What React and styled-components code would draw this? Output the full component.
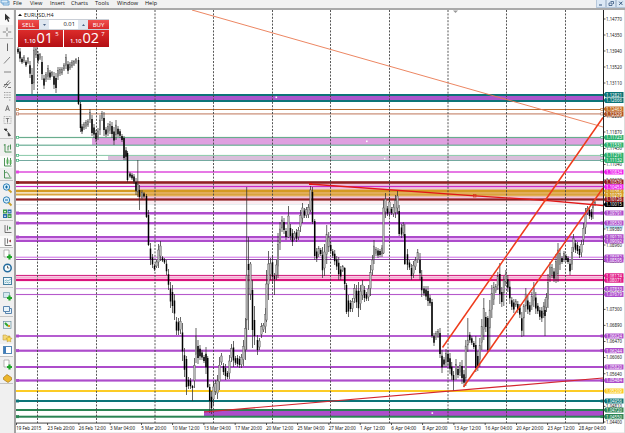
import styled, { createGlobalStyle } from "styled-components";

const menus = [
  ["File", 17],
  ["View", 20],
  ["Insert", 21],
  ["Charts", 24],
  ["Tools", 22],
  ["Window", 28],
  ["Help", 20],
];

// [icon, slot height, active, divider below]
const tools = [
  ["cursor", 15, true],
  ["cross", 14, false, true],
  ["vline", 15],
  ["tline", 12],
  ["hline", 12],
  ["channel", 12],
  ["fibo", 12],
  ["textA", 12],
  ["label", 12],
  ["arrows", 13, false, true],
  ["bars", 17],
  ["candles", 12, true],
  ["line", 13, false, true],
  ["zoomIn", 13],
  ["zoomOut", 13],
  ["tiles", 14, false, true],
  ["scroll", 15],
  ["shift", 12, true, true],
  ["addDoc", 14],
  ["clock", 12],
  ["template", 14, false, true],
  ["addGreen", 15],
  ["windows", 14, false, true],
  ["market", 15],
  ["star", 12],
  ["panel", 13, true, true],
  ["newOrder", 16],
  ["gold", 11, false, true],
];

const PURPLE = "#ad4ccb";
const LILAC = "#dda0ec";
const TEAL = "#0c7477";
const GREEN = "#2b8454";
const MINT = "#2fb270";
const DARKRED = "#921f22";
const GOLD = "#d49a22";

// [y, thickness, color]
const levels = [
  [95, 2, TEAL],
  [98, 4, "#ab56cc"],
  [101, 2, TEAL],
  [109.5, 1, "#bd7031"],
  [113.9, 1.2, "#c98c74"],
  [137.5, 1.2, "#69ad8e"],
  [145.2, 1.2, "#69ad94"],
  [155.4, 1, "#88c8a8"],
  [160.5, 1, "#74aaa0"],
  [172, 2, "#e678e5"],
  [182.5, 2.6, DARKRED],
  [186.5, 1.2, "#cb2bc6"],
  [191, 2.6, GOLD],
  [194.5, 2, "#d9a43c"],
  [199.5, 2.2, DARKRED],
  [204.5, 1, "#e6eef0"],
  [213, 2, PURPLE],
  [214.5, 1, LILAC],
  [223, 2, PURPLE],
  [224.5, 0.8, LILAC],
  [237, 2, PURPLE],
  [239, 2, "#e9b3f5"],
  [241, 2, PURPLE],
  [257.3, 1.4, "#dc94ec"],
  [259.5, 1, "#8c3ba2"],
  [275.5, 1.2, "#d32a85"],
  [277.5, 2, "#f6a9d1"],
  [280, 2.2, "#db137d"],
  [288.7, 1.1, "#d18fe0"],
  [294.5, 1.1, "#b659cb"],
  [336, 1.8, PURPLE],
  [350.7, 2.2, PURPLE],
  [367, 2, PURPLE],
  [380.5, 2.2, PURPLE],
  [391, 2, "#fccb25"],
  [401, 2, TEAL],
  [410, 2, GREEN],
  [416.7, 2, GREEN],
];

// [x, y, width, height, color]
const zones = [
  [92, 138, 511, 7, "#dfa0e0"],
  [108, 156, 495, 4.5, "#d9bedb"],
  [138, 184, 465, 15, "#efc4df"],
  [138, 189.5, 465, 7, "#e8b675"],
  [138, 200, 465, 4, "#faecf1"],
  [204, 411, 399, 5, PURPLE],
];

const separators = [37.5, 96.5, 155, 213.5, 272.5, 330.5, 389.5, 448, 506.5, 565.5];

const ticks = [
  ["1.14770", 19], ["1.14350", 35], ["1.13940", 51], ["1.13520", 67],
  ["1.13110", 83], ["1.12280", 116.5], ["1.11870", 132], ["1.11450", 148.5],
  ["1.11040", 164.5], ["1.10620", 180], ["1.09380", 229], ["1.08960", 245],
  ["1.08550", 261.5], ["1.07720", 292], ["1.07300", 309.3], ["1.06890", 325.3],
  ["1.06470", 341.5], ["1.06060", 357.5], ["1.05640", 373.8], ["1.04810", 406.3],
  ["1.04400", 422],
];

const tags = [
  ["1.12821", 94.6, TEAL], ["1.12666", 100.4, TEAL],
  ["1.12463", 109, "#c56b20"], ["1.12329", 114, "#ad5020"],
  ["1.11723", 137.5, MINT], ["1.11531", 145, MINT],
  ["1.11271", 155.3, MINT], ["1.11132", 160.5, MINT],
  ["1.10834", 172, "#ee20ed"], ["1.10576", 182, DARKRED],
  ["1.10382", 191, GOLD], ["1.10453", 186.8, "#ee20ed"],
  ["1.10279", 194.8, GOLD], ["1.10126", 199.5, DARKRED],
  ["1.10015", 204.5, "#000"], ["1.09791", 213, PURPLE],
  ["1.09530", 223, PURPLE], ["1.09170", 236.8, PURPLE],
  ["1.09092", 240.8, PURPLE], ["1.08652", 257, PURPLE],
  ["1.08595", 259.8, PURPLE], ["1.08174", 275.8, "#e11a86"],
  ["1.08071", 280.2, "#e11a86"], ["1.07833", 288.7, PURPLE],
  ["1.07679", 294.5, PURPLE], ["1.06624", 336, PURPLE],
  ["1.06244", 350.7, PURPLE], ["1.05820", 367, PURPLE],
  ["1.05484", 380.5, PURPLE], ["1.05209", 391, "#fccb25"],
  ["1.04956", 401, TEAL], ["1.04720", 410, GREEN],
  ["1.04550", 416.6, GREEN],
];

const dates = [
  "19 Feb 2015", "23 Feb 20:00", "26 Feb 12:00", "3 Mar 04:00", "5 Mar 20:00",
  "10 Mar 12:00", "13 Mar 04:00", "17 Mar 20:00", "20 Mar 12:00", "25 Mar 04:00",
  "27 Mar 20:00", "1 Apr 12:00", "6 Apr 04:00", "8 Apr 20:00", "13 Apr 12:00",
  "16 Apr 04:00", "20 Apr 20:00", "23 Apr 12:00", "28 Apr 04:00",
];

// [y, color, hollow]
const handles = [
  [109.5, "#bd7031", true], [113.9, "#b66b50", true], [137.5, MINT, true],
  [145.2, MINT, true], [155.4, MINT, true], [160.5, MINT, true],
  [172, "#e640e5"], [182.5, DARKRED], [213, PURPLE], [223, PURPLE],
  [237, PURPLE], [336, PURPLE], [350.7, PURPLE], [380.5, PURPLE],
  [401, TEAL], [416.7, GREEN],
];

// x, high, low and optionally body top, body bottom
const candles = [
  [18, 47, 54], [20, 48, 62], [22, 57, 64], [24, 55, 63], [26, 60, 67],
  [28, 57, 64], [30, 61, 78], [32, 68, 94, 75, 84], [34, 47, 90, 50, 83],
  [36, 46, 58], [38, 51, 64], [40, 53, 60], [42, 56, 80], [44, 75, 89],
  [46, 72, 82], [48, 65, 80], [50, 70, 80], [52, 71, 77], [54, 72, 89],
  [56, 73, 93], [58, 67, 80], [60, 67, 76], [62, 67, 75], [64, 63, 71],
  [66, 54, 69], [68, 61, 74], [70, 62, 70], [72, 60, 68], [74, 60, 66],
  [76, 58, 64], [78.5, 57, 105, 60, 104], [80.5, 102, 132, 104, 128],
  [82, 124, 134], [84, 122, 130], [86, 120, 129], [88, 119, 127],
  [90, 109, 123], [92, 115, 136, 119, 133], [94, 124, 138], [96, 130, 142],
  [98, 128, 140], [100, 115, 135], [102, 111, 121], [104, 112, 136],
  [106, 127, 137], [108, 123, 136], [110, 121, 134], [112, 122, 138],
  [114, 127, 145], [116, 120, 140], [118, 126, 137], [120, 129, 138],
  [122, 134, 142], [124, 136, 160, 138, 158], [126, 147, 160],
  [127.5, 151, 182, 153, 180], [130, 172, 178], [132, 173, 180],
  [134, 174, 184], [136, 178, 195], [137.8, 160, 197, 184, 192],
  [139.5, 185, 210, 190, 197], [142, 190, 200], [144, 192, 198],
  [146.5, 194, 218, 196, 217], [148.5, 210, 246, 215, 245],
  [150.5, 243, 265], [152.5, 254, 268], [154.5, 264, 271], [156.5, 260, 268],
  [158.5, 244, 268], [160.5, 241, 261], [162.5, 256, 262], [164.5, 258, 264],
  [166.5, 260, 275], [168.5, 269, 290], [170.5, 282, 308], [172.5, 285, 313],
  [174.5, 294, 320], [176.5, 317, 335], [178.5, 318, 335], [180.5, 317, 334],
  [182.5, 323, 361], [184.5, 348, 377], [186.5, 356, 395, 359, 387],
  [188.5, 377, 389], [190.5, 378, 389], [192.5, 385, 401, 386, 388],
  [194.5, 358, 388], [196, 328, 363], [198, 340, 364], [200, 345, 360],
  [202, 350, 360], [204, 355, 363], [206, 347, 374], [207.7, 356, 388, 358, 387],
  [209.7, 384, 413, 387, 401], [211.5, 391, 414], [213.5, 381, 405],
  [215.5, 380, 395], [217.5, 375, 399], [219.5, 357, 390], [221.5, 353, 365],
  [223.5, 363, 375], [225.5, 364, 380], [227.5, 371, 379], [229.5, 355, 379],
  [231.5, 344, 362], [233.5, 341, 367], [235.5, 356, 365], [237.5, 355, 367],
  [239.5, 356, 368], [241.5, 354, 368], [243.5, 340, 366], [245.5, 318, 360],
  [246.7, 187, 350, 275, 320], [248.5, 237, 330, 264, 270],
  [250.5, 262, 300, 264, 294], [252.5, 280, 348, 290, 330],
  [254.5, 306, 345, 320, 336], [257.5, 335, 355], [259.5, 338, 350],
  [261.5, 323, 338], [263.5, 323, 332], [265.5, 308, 333],
  [266.5, 270, 322, 284, 320], [268.5, 251, 300, 264, 284], [270.5, 258, 280],
  [272.5, 255, 284], [274.5, 273, 295, 276, 279], [276.5, 260, 280],
  [278, 233, 278], [280, 222, 250], [282, 216, 232], [284, 218, 234],
  [286, 228, 240], [288.5, 206, 238, 216, 237], [290.5, 224, 240],
  [292.5, 229, 246], [294.5, 231, 240], [296.5, 229, 242], [298.5, 227, 240],
  [300.5, 210, 232], [302.5, 203, 223], [304.5, 208, 218], [306.5, 207, 218],
  [308.5, 204, 218], [310.5, 186, 212, 190, 210], [312.5, 187, 224, 192, 222],
  [314.7, 219, 260, 221, 256], [316.7, 248, 262], [318.7, 246, 257],
  [320.7, 248, 256], [322.5, 247, 278], [324.5, 244, 276], [326.7, 225, 264],
  [328.7, 232, 252], [330.7, 242, 254], [332.7, 249, 258], [334.7, 250, 265],
  [336.7, 256, 270], [338.7, 257, 280], [340.7, 266, 280], [342.7, 265, 272],
  [344.7, 267, 290, 268, 284], [346.5, 283, 314, 285, 312], [348.5, 295, 317],
  [350.5, 300, 312], [352.5, 298, 312], [354.5, 284, 303], [356.5, 285, 308],
  [358.5, 282, 317], [360.5, 285, 310], [362.5, 280, 300], [364.5, 286, 302],
  [366.5, 292, 301], [368.5, 285, 301], [370.5, 265, 296], [372.5, 255, 275],
  [374, 240, 264], [376, 247, 256], [378, 248, 258], [380, 249, 257],
  [382, 245, 257], [383.5, 200, 254, 208, 253], [385.5, 193, 218],
  [387.5, 206, 216], [389.5, 197, 217], [391.5, 207, 215], [393.5, 204, 217],
  [395.5, 195, 218], [397.5, 190, 214], [399.2, 205, 236, 211, 234],
  [401.5, 224, 238], [403.3, 222, 236], [404.8, 224, 265, 234, 264],
  [407.5, 249, 270], [409.5, 260, 270], [411.5, 264, 280], [413.5, 261, 278],
  [415.5, 257, 270], [417.7, 249, 263], [420, 253, 280], [421.7, 270, 297],
  [424, 286, 296], [426, 286, 300], [428, 286, 306], [430, 295, 306],
  [432, 299, 338, 302, 336], [434, 333, 346], [436, 331, 340], [438, 329, 338],
  [440, 328, 358, 333, 354], [442, 350, 373], [444, 357, 367], [446, 349, 367],
  [448, 350, 366], [450, 353, 374], [451.7, 362, 380], [453.5, 371, 391, 375, 380],
  [456, 359, 380], [458, 366, 378], [460, 362, 376], [462, 360, 384],
  [464, 370, 387], [465.8, 340, 386, 346, 378], [467.8, 318, 352, 340, 345],
  [469.8, 332, 343], [471.8, 336, 345], [473.8, 341, 349],
  [475.8, 336, 372, 345, 368], [477.8, 351, 371], [479.8, 338, 367],
  [481.8, 319, 350], [483.8, 298, 340], [485.8, 312, 332], [487.8, 316, 352, 318, 350],
  [489.8, 300, 350, 310, 328], [491.8, 285, 318], [493.8, 282, 305],
  [495.8, 284, 293], [497.8, 272, 290], [499.8, 263, 304, 274, 294],
  [501.8, 287, 307], [503.8, 276, 306, 280, 293], [505.8, 270, 286],
  [507.8, 275, 292], [509.8, 281, 304], [511.8, 297, 310], [513.8, 299, 313],
  [515.8, 299, 307], [517.8, 301, 313], [519.8, 304, 318], [521.8, 312, 337],
  [523.8, 304, 336, 306, 318], [525.8, 288, 312], [527.8, 296, 314],
  [529.8, 302, 315], [531.8, 292, 310], [533.8, 282, 307], [535.8, 292, 314],
  [537.8, 303, 314], [539.8, 307, 320], [541.8, 307, 322], [543.8, 302, 318],
  [545, 299, 336, 310, 316], [546.5, 293, 312], [548, 274, 308],
  [550, 262, 282], [552, 264, 278], [554, 268, 282], [556, 254, 283],
  [558, 243, 282, 250, 274], [560, 248, 270], [562, 256, 264], [564, 251, 262],
  [566, 254, 262], [568, 256, 264], [570, 260, 275], [572, 247, 270],
  [573.5, 234, 252], [575.5, 240, 253], [577.5, 242, 254], [579.5, 246, 258],
  [581.5, 240, 257], [583.5, 223, 245], [585.5, 208, 234], [587.5, 206, 215],
  [589.5, 207, 219], [591.5, 209, 220], [593, 200, 219, 204, 208],
  [595, 201, 206],
];

const Candle = ({ data, prev }) => {
  const [x, high, low, top, bottom] = data;
  const inset = (low - high) * 0.25;
  const y1 = top ?? high + inset;
  const y2 = bottom ?? low - inset;
  const rising = prev ? high + low < prev[1] + prev[2] : false;
  return (
    <g>
      <line x1={x} x2={x} y1={high} y2={low} stroke="#333" strokeWidth="0.75" />
      <rect
        x={x - 0.75}
        y={y1}
        width="1.5"
        height={Math.max(1, y2 - y1)}
        fill={rising ? "#b5b5b5" : "#000"}
        stroke={rising ? "#555" : "none"}
        strokeWidth="0.4"
      />
    </g>
  );
};

const Chart = () => (
  <ChartSvg viewBox="16 10 609 423">
    <rect x="16" y="10" width="609" height="423" fill="#fff" />
    {zones.map(([x, y, w, h, color]) => (
      <rect key={y} x={x} y={y} width={w} height={h} fill={color} />
    ))}
    {levels.map(([y, size, color]) => (
      <rect key={y} x="16" y={y - size / 2} width="587" height={size} fill={color} />
    ))}
    {separators.map((x) => (
      <line
        key={x}
        x1={x}
        x2={x}
        y1="10"
        y2="423"
        stroke="#444"
        strokeWidth="0.9"
        strokeDasharray="2 1.4"
      />
    ))}
    {candles.map((candle, i) => (
      <Candle key={candle[0]} data={candle} prev={candles[i - 1]} />
    ))}
    {handles.map(([y, color, hollow]) => (
      <g key={y} fill={hollow ? "#fff" : color} stroke={color} strokeWidth="0.6">
        <rect x="16.5" y={y - 1.1} width="2.2" height="2.2" />
        <rect x="600.8" y={y - 1.1} width="2.2" height="2.2" />
      </g>
    ))}
    <g fill="#fff">
      <rect x="275.5" y="96.5" width="1.6" height="1.6" />
      <rect x="366" y="140.5" width="1.6" height="1.6" />
      <rect x="384" y="157.8" width="1.4" height="1.4" />
      <rect x="431.5" y="412.3" width="1.6" height="1.6" />
    </g>
    <g fill="none">
      <path d="M192 10 L603 127" stroke="#ea7850" strokeWidth="0.9" />
      <path d="M442.5 347.5 L603 117.5" stroke="#ee3b1b" strokeWidth="1.5" />
      <path d="M463.5 387 L603 188" stroke="#ee3b1b" strokeWidth="1.5" />
      <path d="M309 184 L475 195.8 L545 200.3 L603 205.5" stroke="#e01818" strokeWidth="1.3" />
      <path d="M204 412 L603 378" stroke="#d4252f" strokeWidth="1.2" />
      <rect x="473.5" y="194.5" width="2.5" height="2.5" stroke="#d43b18" strokeWidth="0.7" />
    </g>
    <rect x="309" y="183" width="3" height="2" fill="#e01818" />
    <rect x="543.5" y="198.8" width="3" height="2.5" fill="#ee3b1b" />
    <path d="M453 10.5 h5 l-2.5 2.5z" fill="#999" />
    <rect x="603" y="10" width="1" height="413" fill="#222" />
    <rect x="16" y="422.6" width="588" height="0.9" fill="#333" />
    <rect x="604" y="224.5" width="19" height="4" fill="#b9e4f4" />
    {ticks.map(([text, y]) => (
      <g key={text}>
        <rect x="604" y={y - 0.4} width="1.5" height="0.8" fill="#333" />
        <Price x="606" y={y + 1.9} textLength="16" lengthAdjust="spacingAndGlyphs">
          {text}
        </Price>
      </g>
    ))}
    {tags.map(([text, y, color]) => (
      <g key={text}>
        <path d={`M603.5 ${y} l2 -2.6 h18 v5.2 h-18z`} fill={color} />
        <Price $light x="606" y={y + 1.9} textLength="16" lengthAdjust="spacingAndGlyphs">
          {text}
        </Price>
      </g>
    ))}
    {dates.map((text, i) => {
      const x = 16 + i * 31.25;
      return (
        <g key={text}>
          <rect x={x} y="423" width="0.8" height="2" fill="#333" />
          <Price
            x={x + 0.3}
            y="430.3"
            textLength={text.length > 11 ? 27 : 25}
            lengthAdjust="spacingAndGlyphs"
          >
            {text}
          </Price>
        </g>
      );
    })}
    <rect x="16" y="432" width="609" height="1" fill="#eee" />
    <rect x="624" y="10" width="1" height="423" fill="#ddd" />
  </ChartSvg>
);

const plus = <path d="M6 8h5M8.5 5.5v5" stroke="#20a52b" strokeWidth="2.2" />;

const icons = {
  cursor: <path d="M4 1.5v7l1.8-1.6 1.3 3 1.2-.6-1.3-2.8h2.3z" fill="#333" />,
  cross: <path d="M6 1.5v3.5M6 7v3.5M1.8 6h3.2M7 6h3.2" stroke="#666" strokeWidth=".8" />,
  vline: <path d="M6.5 2.5v7.5" stroke="#666" />,
  tline: <path d="M3 9.5L9 3" stroke="#666" strokeWidth="0.8" />,
  hline: <path d="M3 6h7" stroke="#777" strokeWidth=".9" />,
  channel: <path d="M2.5 9L8 2.5M4 10l5.5-6M3 6.5h4M7 9.5h3" stroke="#555" strokeWidth=".8" />,
  fibo: <path d="M3 2.5h7M3 5h7M3 7.5h7M8 10h2" stroke="#888" strokeWidth=".8" strokeDasharray="1 .6" />,
  textA: <path d="M4.6 9L6.5 3.5 8.4 9M5.3 7.2h2.4" stroke="#555" strokeWidth=".8" />,
  label: (
    <>
      <rect x="3" y="2.5" width="7" height="7" stroke="#999" strokeWidth=".7" strokeDasharray="1 .7" />
      <path d="M4.8 4.5h3.4M6.5 4.5V8.5" stroke="#666" strokeWidth=".8" />
    </>
  ),
  arrows: <path d="M3 3l3 0-1 2zM7 7l2.5 2.5L7.5 10zM5 4l4 4.5" fill="#333" stroke="#333" strokeWidth=".7" />,
  bars: <path d="M4 2v8h6.5M4 3H2.8M7 4v4.5M7 4h1.5M9.5 2.5v5" stroke="#267b32" strokeWidth=".8" />,
  candles: (
    <>
      <path d="M3.5 2v8h7M6.5 1.5v7M9.5 2v7" stroke="#267b32" strokeWidth=".8" />
      <path d="M5.5 3.5h2v4h-2zM8.7 4h1.8v4H8.7z" fill="#56ad59" />
    </>
  ),
  line: <path d="M3.5 2v8H10.5M4 5c2-2 3 0 5 4" stroke="#267b32" strokeWidth=".8" />,
  zoomIn: (
    <>
      <path d="M7.5 7.5l3 3" stroke="#caa12b" strokeWidth="1.8" />
      <circle cx="5.5" cy="5" r="3.2" fill="#d7f0fc" stroke="#3180b5" />
      <path d="M4 5h3M5.5 3.5v3" stroke="#1568a4" />
    </>
  ),
  zoomOut: (
    <>
      <path d="M7.5 7.5l3 3" stroke="#caa12b" strokeWidth="1.8" />
      <circle cx="5.5" cy="5" r="3.2" fill="#d7f0fc" stroke="#3180b5" />
      <path d="M4 5h3" stroke="#1568a4" />
    </>
  ),
  tiles: (
    <>
      <path d="M2 1.5h4v4H2zM6.5 6h4v4h-4z" fill="#3b9a48" />
      <path d="M6.5 1.5h4v4h-4zM2 6h4v4H2z" fill="#286dac" />
      <path d="M3 3.7h2M7.5 3.7h2M3 8.2h2M7.5 8.2h2" stroke="#fff" />
    </>
  ),
  scroll: (
    <>
      <path d="M4 2v7.5h6.5M6.5 2.5v5" stroke="#555" strokeWidth=".8" />
      <path d="M8 3.5l2.5 1.5L8 6.5z" fill="#36a04a" />
    </>
  ),
  shift: (
    <>
      <path d="M4 2v7.5h6.5M6.5 2.5v5" stroke="#555" strokeWidth=".8" />
      <path d="M10 3.5L7.5 5 10 6.5z" fill="#9b4848" />
    </>
  ),
  addDoc: (
    <>
      <path d="M3 1h5v7H3z" fill="#fff" stroke="#999" strokeWidth=".7" />
      {plus}
    </>
  ),
  clock: (
    <>
      <circle cx="6.5" cy="6" r="3.7" fill="#f7fcff" stroke="#246b9e" strokeWidth="1.5" />
      <path d="M6.5 3.8V6h1.7" stroke="#333" strokeWidth=".7" />
    </>
  ),
  template: (
    <>
      <rect x="2.5" y="2.5" width="8" height="7" fill="#eef8fd" stroke="#447fa0" />
      <path d="M3.5 6l2-1 1.5 1 3-2M3.5 8l2-1 2 1 2-1" stroke="#579cae" strokeWidth=".7" />
    </>
  ),
  addGreen: (
    <>
      <path d="M2.5 2.5h6v5h-6z" fill="#d6e9f0" stroke="#6b98a6" strokeWidth=".7" />
      {plus}
    </>
  ),
  windows: <path d="M2.5 2.5h6v5h-6zM4.5 8v1.5h6V4.5H9" fill="#e7f4fb" stroke="#5984ae" />,
  market: (
    <>
      <rect x="2.5" y="2.5" width="7.5" height="7" fill="#e7f2f0" stroke="#6b91a1" strokeWidth=".7" />
      <path d="M4 4l3 3" stroke="#2ca42b" strokeWidth="2" />
      <path d="M7 7h2" stroke="#d9981f" strokeWidth="2" />
    </>
  ),
  star: (
    <>
      <path d="M2 3h3l1 1h3v4H2z" fill="#f5d777" stroke="#bb9332" strokeWidth=".5" />
      <path d="M8 4l1 2 2 .3-1.5 1.5.3 2L8 9l-1.9.8.3-2L5 6.3 7 6z" fill="#ffe050" stroke="#b08a23" strokeWidth=".5" />
    </>
  ),
  panel: (
    <>
      <rect x="2.5" y="2.5" width="8" height="7" fill="#fff" stroke="#5487b6" />
      <path d="M3 3h2v6H3z" fill="#3e7dbc" />
    </>
  ),
  newOrder: (
    <>
      <path d="M3 1h5v7H3z" fill="#fff" stroke="#999" strokeWidth=".7" />
      {plus}
    </>
  ),
  gold: <path d="M2.5 5.5L6 2.5l4.5 3V8L7 10.5l-4.5-3z" fill="#ecb62c" stroke="#9a6b12" strokeWidth=".6" />,
};

function App() {
  return (
    <>
      <GlobalStyle />
      <Terminal>
        <MenuBar>
          <Logo viewBox="0 0 10 6">
            <path d="M1 0h7v3H1zM3 3v2h6V1" fill="#d9ecfa" stroke="#5697cd" strokeWidth=".8" />
          </Logo>
          {menus.map(([name, width]) => (
            <MenuItem key={name} $width={width}>
              {name}
            </MenuItem>
          ))}
          <WindowButtons>
            <svg width="8" height="7"><path d="M2 5h3" stroke="#37577e" /></svg>
            <svg width="8" height="7">
              <path d="M3.5 1.5h3v2.5M2 3h3v2.5H2z" fill="none" stroke="#37577e" strokeWidth=".8" />
            </svg>
            <svg width="8" height="7"><path d="M2.2 1.7l3.2 3.2M5.4 1.7L2.2 4.9" stroke="#37577e" /></svg>
          </WindowButtons>
        </MenuBar>
        <Body>
          <ToolBar>
            {tools.map(([name, height, active, divider]) => (
              <Tool key={name} $height={height} $active={active} $divider={divider}>
                <svg width="12" height="12" viewBox="0 0 12 12" fill="none">
                  {icons[name]}
                </svg>
              </Tool>
            ))}
          </ToolBar>
          <ChartArea>
            <Chart />
            <TradePanel>
              <Symbol>
                <svg width="4" height="3"><path d="M0 3l2-2.2L4 3z" fill="#111" /></svg>
                EURUSD,H4
              </Symbol>
              <VolumeRow>
                <SideButton>SELL</SideButton>
                <Stepper>
                  <svg width="3" height="2"><path d="M0 0h3L1.5 2z" fill="#4a6386" /></svg>
                </Stepper>
                <Volume>0.01</Volume>
                <Stepper>
                  <svg width="3" height="2"><path d="M0 2h3L1.5 0z" fill="#4a6386" /></svg>
                </Stepper>
                <SideButton>BUY</SideButton>
              </VolumeRow>
              <QuoteRow>
                <Quote>
                  <Small>1.10</Small>
                  <Big>01</Big>
                  <Sup>5</Sup>
                </Quote>
                <Quote>
                  <Small>1.10</Small>
                  <Big>02</Big>
                  <Sup>7</Sup>
                </Quote>
              </QuoteRow>
            </TradePanel>
          </ChartArea>
        </Body>
      </Terminal>
    </>
  );
}

export default App;

const GlobalStyle = createGlobalStyle`
  body {
    margin: 0;
    overflow: hidden;
    font-family: "Open Sans", "Noto Sans", sans-serif;
  }

  svg {
    display: block;
  }
`;

const Terminal = styled.div`
  display: flex;
  flex-direction: column;
  width: 625px;
  height: 433px;
  overflow: hidden;
  background-color: #f0f0f0;
`;

const MenuBar = styled.header`
  display: flex;
  height: 8px;
  box-sizing: border-box;
  background-color: #f1f1f1;
`;

const Logo = styled.svg`
  width: 10px;
  height: 6px;
  margin-right: 3px;
`;

const MenuItem = styled.span`
  width: ${({ $width }) => $width}px;
  height: 7px;
  font-size: 5.6px;
  line-height: 6px;
  color: #111;
  white-space: nowrap;
`;

const WindowButtons = styled.div`
  display: flex;
  gap: 2px;
  margin-left: auto;

  svg {
    background-color: #dce8f5;
    outline: 0.5px solid #b6c7da;
  }
`;

const Body = styled.div`
  display: flex;
  flex: 1;
  min-height: 0;
  border-top: 2px solid #a9a9a9;
  box-sizing: border-box;
`;

const ToolBar = styled.nav`
  width: 16px;
  box-sizing: border-box;
  border-right: 2px solid #a2a2a2;
  background-color: #f0f0f0;
`;

const Tool = styled.div`
  display: flex;
  align-items: center;
  justify-content: center;
  width: 13px;
  height: ${({ $height }) => $height}px;
  box-sizing: border-box;
  background-color: ${({ $active }) => ($active ? "#fafafa" : "transparent")};
  border-bottom: ${({ $divider }) => ($divider ? "1px solid #c4c4c4" : "none")};

  svg {
    flex-shrink: 0;
  }
`;

const ChartArea = styled.main`
  position: relative;
  width: 609px;
  height: 423px;
`;

const ChartSvg = styled.svg`
  width: 609px;
  height: 423px;
`;

const Price = styled.text`
  font-family: "Noto Sans", sans-serif;
  font-size: 5.4px;
  fill: ${({ $light }) => ($light ? "#fff" : "#111")};
`;

const TradePanel = styled.section`
  position: absolute;
  top: 0;
  left: 2px;
  width: 91px;
`;

const Symbol = styled.div`
  display: flex;
  align-items: center;
  gap: 2px;
  height: 9px;
  font-size: 5.4px;
  line-height: 8px;
  color: #111;
`;

const VolumeRow = styled.div`
  display: flex;
  height: 9px;
  border: solid #c9ced6;
  border-width: 0.5px 0;
  background-color: #fff;
`;

const SideButton = styled.div`
  width: 21px;
  font-size: 6px;
  line-height: 10px;
  text-align: center;
  color: #fff;
  background: linear-gradient(#f0504e, #d92a2b);
`;

const Stepper = styled.div`
  display: flex;
  align-items: center;
  justify-content: center;
  width: 10px;
  background-color: #dfe7f0;
`;

const Volume = styled.div`
  flex: 1;
  padding-right: 3px;
  font-size: 5.8px;
  line-height: 9px;
  text-align: right;
  color: #111;
`;

const QuoteRow = styled.div`
  display: flex;
  gap: 1px;
`;

const Quote = styled.div`
  display: flex;
  flex: 1;
  padding-left: 6px;
  height: 17px;
  color: #fff;
  background: linear-gradient(#dc2c2b, #b30f14);
`;

const Small = styled.span`
  margin-top: 6px;
  font-size: 5.8px;
  font-weight: 600;
  line-height: 11px;
`;

const Big = styled.span`
  margin: 0 2px 0 1px;
  font-size: 14.5px;
  line-height: 16px;
`;

const Sup = styled.span`
  margin-top: 1px;
  font-size: 6px;
  line-height: 7px;
`;
